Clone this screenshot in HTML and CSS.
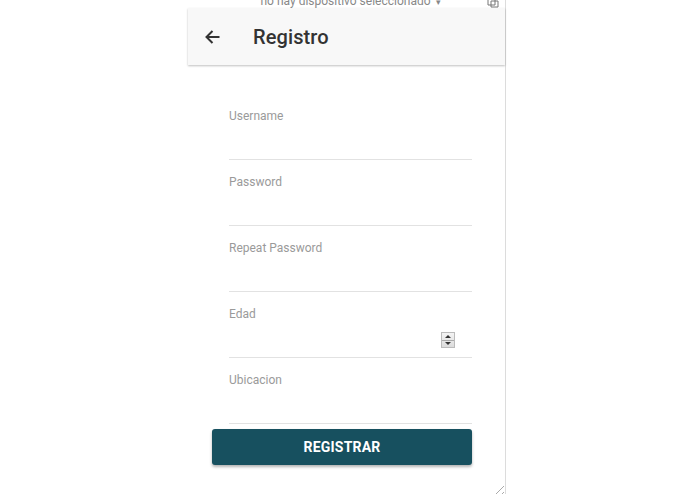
FILE: index.html
```html
<!DOCTYPE html>
<html lang="es">
<head>
<meta charset="utf-8">
<link rel="stylesheet" href="styles.css">
<title>Registro</title>
</head>
<body>
<div class="device">
  <div class="devbar">
    <span class="devtext">no hay dispositivo seleccionado <span class="caret">▾</span></span>
    <svg class="devicon" width="14" height="10" viewBox="0 0 14 10"><path d="M2 1h7v6H2z M5 3h7v6H5z" fill="none" stroke="#777" stroke-width="1"/></svg>
  </div>
  <header class="appbar">
    <svg class="back" width="16" height="16" viewBox="0 0 16 16"><path d="M15.5 8H2.5 M8.5 2 2.5 8l6 6" fill="none" stroke="#333" stroke-width="2"/></svg>
    <h1 class="title">Registro</h1>
  </header>
  <form class="form">
    <div class="field"><label class="label">Username</label><div class="input"></div></div>
    <div class="field"><label class="label">Password</label><div class="input"></div></div>
    <div class="field"><label class="label">Repeat Password</label><div class="input"></div></div>
    <div class="field"><label class="label">Edad</label><div class="input number"><span class="spin"><span class="up"></span><span class="down"></span></span></div></div>
    <div class="field"><label class="label">Ubicacion</label><div class="input"></div></div>
    <button type="button" class="btn">REGISTRAR</button>
  </form>
  <div class="grip"></div>
</div>
</body>
</html>
```
FILE: styles.css
```css
html, body {
  margin: 0;
  padding: 0;
  background: #fff;
  height: 494px;
  overflow: hidden;
  font-family: Roboto, "Liberation Sans", sans-serif;
}
.device {
  position: relative;
  margin-left: 188px;
  width: 317px;
  height: 494px;
  border-right: 1px solid #dcdcdc;
}
.devbar {
  height: 8px;
  overflow: hidden;
  position: relative;
  display: flex;
  justify-content: center;
  background: #fff;
}
.devtext {
  font-size: 12px;
  line-height: 14px;
  color: #888;
  margin-top: -6px;
  margin-left: 8px;
  white-space: nowrap;
}
.caret { font-size: 9px; margin-left: 2px; }
.devicon {
  position: absolute;
  right: 5px;
  top: -2px;
}
.appbar {
  height: 57px;
  background: #f8f8f8;
  display: flex;
  align-items: center;
  box-shadow: 0 1px 2px rgba(0,0,0,0.25);
  position: relative;
  z-index: 1;
}
.back {
  margin-left: 16px;
  margin-top: 1px;
}
.title {
  margin: 0 0 0 33px;
  font-size: 20px;
  font-weight: 500;
  color: #333;
  letter-spacing: 0.1px;
}
.form {
  padding: 29px 33px 0 24px;
  display: flex;
  flex-direction: column;
}
.field {
  margin: 15px 0 0 17px;
  border-bottom: 1px solid #e2e2e2;
}
.label {
  display: block;
  font-size: 12px;
  line-height: 14px;
  color: #9a9a9a;
}
.input {
  height: 36px;
  position: relative;
}
.spin {
  position: absolute;
  right: 17px;
  top: 11px;
  width: 14px;
  height: 16px;
  border: 1px solid #bbb;
  background: linear-gradient(#f4f4f4, #dcdcdc);
  display: flex;
  flex-direction: column;
  box-sizing: border-box;
}
.spin .up, .spin .down {
  flex: 1;
  position: relative;
}
.spin .up { border-bottom: 1px solid #aaa; }
.spin .up::after, .spin .down::after {
  content: "";
  position: absolute;
  left: 3px;
  border-left: 3px solid transparent;
  border-right: 3px solid transparent;
}
.spin .up::after { top: 2px; border-bottom: 3px solid #333; }
.spin .down::after { top: 1px; border-top: 3px solid #333; }
.btn {
  margin-top: 5px;
  height: 36px;
  width: 260px;
  border: 0;
  border-radius: 3px;
  background: #17505f;
  color: #fff;
  font-family: Roboto, "Liberation Sans", sans-serif;
  font-size: 14px;
  font-weight: 700;
  letter-spacing: 0.2px;
  box-shadow: 0 2px 3px rgba(0,0,0,0.3);
  padding: 0;
}
.grip {
  position: absolute;
  right: 1px;
  bottom: 0;
  width: 12px;
  height: 12px;
  background: repeating-linear-gradient(135deg, transparent 0 3px, #aaa 3px 4px);
  clip-path: polygon(100% 0, 100% 100%, 0 100%);
}
```
